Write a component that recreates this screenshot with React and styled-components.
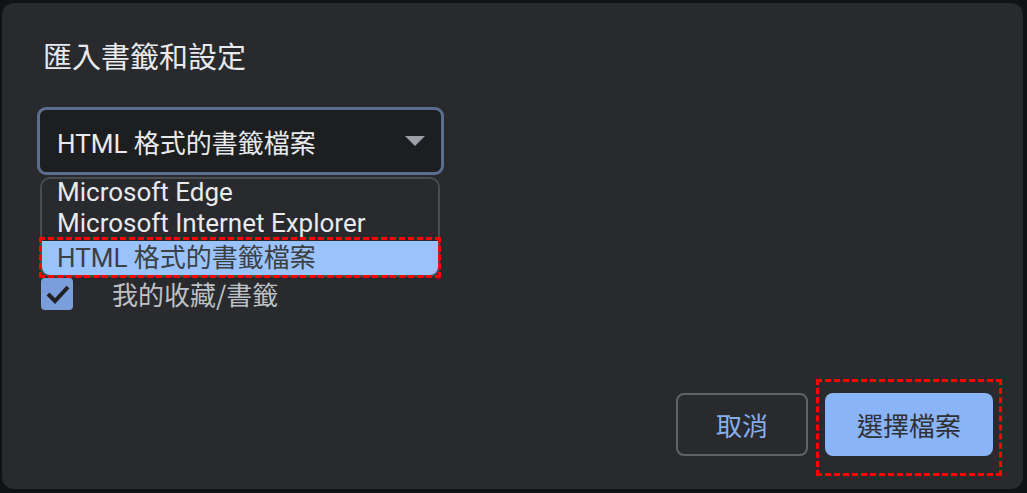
import React from "react";
import styled, { createGlobalStyle } from "styled-components";

const Global = createGlobalStyle`
  html, body { margin: 0; padding: 0; background: #111214; }
  body { font-family: Roboto, "Noto Sans CJK TC", sans-serif; }
  #root { width: 1027px; height: 493px; }
`;

const Page = styled.div`
  width: 1027px;
  height: 493px;
  box-sizing: border-box;
  padding: 3px 4px 4px 2px;
  background: #111214;
  display: flex;
`;

const Dialog = styled.div`
  flex: 1;
  display: flex;
  flex-direction: column;
  box-sizing: border-box;
  padding: 34px 30px 33px 35px;
  background: #292a2d;
  border-radius: 12px;
  color: #e8eaed;
`;

const Title = styled.h1`
  margin: 0;
  padding-left: 6px;
  font-family: "Noto Sans CJK TC", sans-serif;
  font-weight: 400;
  font-size: 29px;
  line-height: 36px;
  color: #e8eaed;
`;

const SelectWrap = styled.div`
  position: relative;
  margin-top: 34px;
  width: 407px;
`;

const SelectBox = styled.div`
  box-sizing: border-box;
  height: 68px;
  display: flex;
  align-items: center;
  justify-content: space-between;
  padding: 0 16px 0 17px;
  background: #1d1e20;
  border: 3px solid #5c6e8d;
  border-radius: 9px;
  font-size: 26px;
  color: #e8eaed;
`;

const Arrow = styled.svg`
  width: 20px;
  height: 10px;
  flex: none;
`;

const Popup = styled.div`
  position: absolute;
  top: calc(100% + 2px);
  left: 3px;
  width: 400px;
  box-sizing: border-box;
  background: #292a2d;
  border: 2px solid #4a4c50;
  border-radius: 10px;
  display: flex;
  flex-direction: column;
  z-index: 2;
`;

const Option = styled.div`
  position: relative;
  font-size: 26px;
  line-height: 26px;
  padding: ${(p) => (p.$active ? "4px 15px 4px" : "0 15px 5px")};
  color: ${(p) => (p.$active ? "#3c4043" : "#e8eaed")};
  background: ${(p) => (p.$active ? "#9bc3fb" : "transparent")};
  border-radius: ${(p) => (p.$last ? "0 0 8px 8px" : "0")};
  white-space: nowrap;
`;

const Annotation = styled.span`
  position: absolute;
  top: ${(p) => p.$t}px;
  bottom: ${(p) => p.$b}px;
  left: ${(p) => p.$l}px;
  right: ${(p) => p.$r}px;
  border: 3px dashed #ff0000;
  pointer-events: none;
`;

const CheckRow = styled.label`
  display: flex;
  align-items: center;
  gap: 39px;
  margin-top: 100px;
  margin-left: 4px;
`;

const CheckBox = styled.span`
  width: 32px;
  height: 32px;
  border-radius: 4px;
  background: #7a9edb;
  display: flex;
  align-items: center;
  justify-content: center;
  flex: none;
`;

const CheckLabel = styled.span`
  font-family: "Noto Sans CJK TC", sans-serif;
  font-size: 26px;
  color: #bdc1c6;
`;

const Spacer = styled.div`
  flex: 1;
`;

const ButtonRow = styled.div`
  display: flex;
  justify-content: flex-end;
  gap: 17px;
`;

const Button = styled.button`
  position: relative;
  box-sizing: border-box;
  height: 63px;
  width: ${(p) => (p.$primary ? "168px" : "132px")};
  border-radius: 8px;
  border: ${(p) => (p.$primary ? "none" : "2px solid #5f6368")};
  background: ${(p) => (p.$primary ? "#8ab4f8" : "transparent")};
  color: ${(p) => (p.$primary ? "#303134" : "#86aeee")};
  font-family: "Noto Sans CJK TC", sans-serif;
  font-size: 26px;
  padding: 0;
  display: flex;
  align-items: center;
  justify-content: center;
`;

export default function App() {
  return (
    <>
      <Global />
      <Page>
        <Dialog>
          <Title>匯入書籤和設定</Title>
          <SelectWrap>
            <SelectBox>
              <span>HTML 格式的書籤檔案</span>
              <Arrow viewBox="0 0 20 10">
                <polygon points="0,0 20,0 10,10" fill="#9aa0a6" />
              </Arrow>
            </SelectBox>
            <Popup>
              <Option>Microsoft Edge</Option>
              <Option>Microsoft Internet Explorer</Option>
              <Option $active $last>
                HTML 格式的書籤檔案
                <Annotation $t={-4} $b={-3} $l={-3} $r={-3} />
              </Option>
            </Popup>
          </SelectWrap>
          <CheckRow>
            <CheckBox>
              <svg width="32" height="32" viewBox="0 0 32 32">
                <polyline
                  points="7,16 14,23 27,9"
                  fill="none"
                  stroke="#202124"
                  strokeWidth="4"
                />
              </svg>
            </CheckBox>
            <CheckLabel>我的收藏/書籤</CheckLabel>
          </CheckRow>
          <Spacer />
          <ButtonRow>
            <Button>取消</Button>
            <Button $primary>
              選擇檔案
              <Annotation $t={-14} $b={-20} $l={-9} $r={-9} />
            </Button>
          </ButtonRow>
        </Dialog>
      </Page>
    </>
  );
}
